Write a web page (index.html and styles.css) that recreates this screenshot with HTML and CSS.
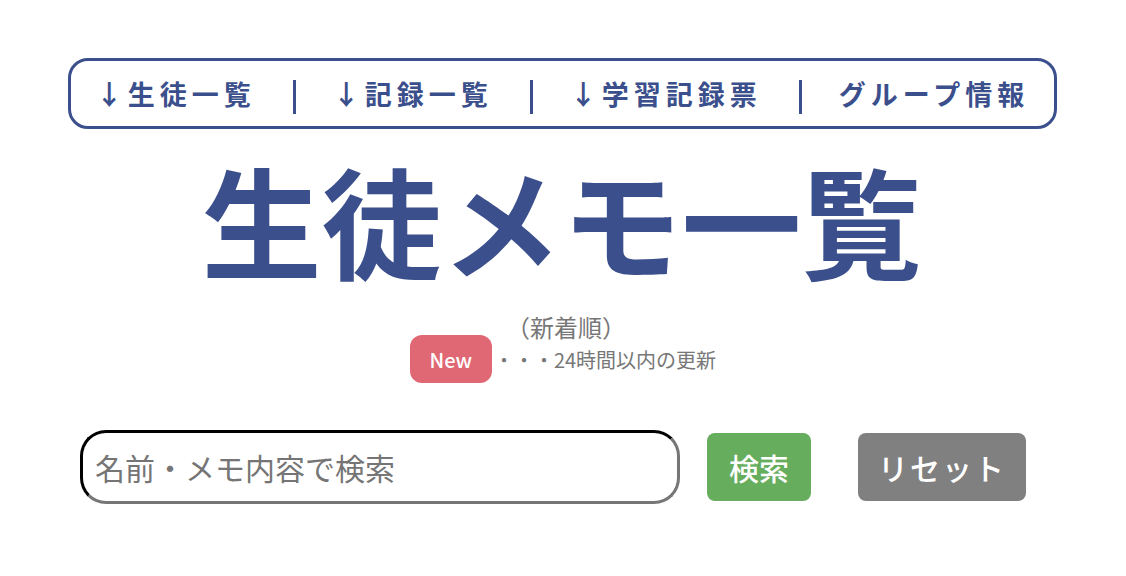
FILE: index.html
```html
<!DOCTYPE html>
<html lang="ja">
<head>
<meta charset="utf-8">
<title>生徒メモ一覧</title>
<link rel="stylesheet" href="styles.css">
</head>
<body>
<div class="page">
  <nav class="nav">
    <a class="nav-item" href="#students"><span class="arrow">↓</span>生徒一覧</a>
    <span class="sep"></span>
    <a class="nav-item" href="#records"><span class="arrow">↓</span>記録一覧</a>
    <span class="sep"></span>
    <a class="nav-item" href="#sheet"><span class="arrow">↓</span>学習記録票</a>
    <span class="sep"></span>
    <a class="nav-item" href="#group">グループ情報</a>
  </nav>
  <h1 class="title">生徒メモ一覧</h1>
  <div class="legend">
    <div class="order">（新着順）</div>
    <div class="legend-row"><span class="badge">New</span><span class="legend-text">・・・24時間以内の更新</span></div>
  </div>
  <form class="search">
    <input class="search-input" type="text" placeholder="名前・メモ内容で検索">
    <button class="btn btn-search" type="button">検索</button>
    <button class="btn btn-reset" type="button">リセット</button>
  </form>
</div>
</body>
</html>
```
FILE: styles.css
```css
* { box-sizing: border-box; }
html, body { margin: 0; padding: 0; background: #fff; }
body {
  font-family: "Noto Sans CJK JP", "Noto Sans", sans-serif;
  color: #333;
}
.page {
  width: 1126px;
  padding-top: 58px;
  display: flex;
  flex-direction: column;
  align-items: center;
}
.nav {
  width: 989px;
  height: 71px;
  margin-left: -1px;
  border: 3px solid #3b4f8c;
  border-radius: 20px;
  display: flex;
  align-items: center;
  justify-content: center;
  gap: 37px;
  padding-left: 0;
}
.nav-item {
  color: #3b4f8c;
  font-weight: 700;
  font-size: 27px;
  letter-spacing: 5px;
  text-decoration: none;
  line-height: 1;
  display: flex;
  align-items: center;
}
.arrow {
  font-family: "Noto Sans CJK JP", sans-serif;
  font-weight: 700;
  letter-spacing: 0;
  margin-right: 5px;
}
.sep {
  width: 3px;
  height: 34px;
  background: #3b4f8c;
  margin-top: 6px;
}
.title {
  margin: 30px 0 0;
  font-size: 120px;
  font-weight: 700;
  line-height: 1;
  height: 120px;
  color: #3b4f8c;
  letter-spacing: 0;
  margin-left: -3px;
}
.legend {
  margin-top: 33px;
  display: flex;
  flex-direction: column;
  align-items: center;
  color: #777;
}
.order {
  font-size: 24px;
  line-height: 30px;
  margin-left: 6px;
}
.legend-row {
  display: flex;
  align-items: center;
  margin-top: -7px;
}
.badge {
  width: 82px;
  height: 48px;
  border-radius: 12px;
  background: #e06874;
  color: #fff;
  font-size: 20px;
  font-weight: 500;
  display: flex;
  align-items: center;
  justify-content: center;
}
.legend-text {
  font-size: 20px;
  margin-left: 2px;
  color: #777;
}
.search {
  width: 1126px;
  margin-top: 47px;
  display: flex;
  align-items: center;
  padding-left: 80px;
}
.search-input {
  width: 600px;
  height: 74px;
  border: 3px inset #767676;
  border-top-color: #222;
  border-left-color: #222;
  border-radius: 26px;
  padding: 0 12px;
  font-family: "Noto Sans CJK JP", "Noto Sans", sans-serif;
  font-size: 30px;
  color: #333;
  outline: none;
}
.search-input::placeholder { color: #757575; }
.btn {
  height: 68px;
  border: none;
  border-radius: 8px;
  color: #fff;
  font-family: "Noto Sans CJK JP", "Noto Sans", sans-serif;
  font-size: 30px;
  font-weight: 500;
  padding: 0;
}
.btn-search {
  width: 104px;
  margin-left: 27px;
  background: #66ad5e;
}
.btn-reset {
  width: 168px;
  margin-left: 47px;
  background: #808080;
  letter-spacing: 2px;
}
```
